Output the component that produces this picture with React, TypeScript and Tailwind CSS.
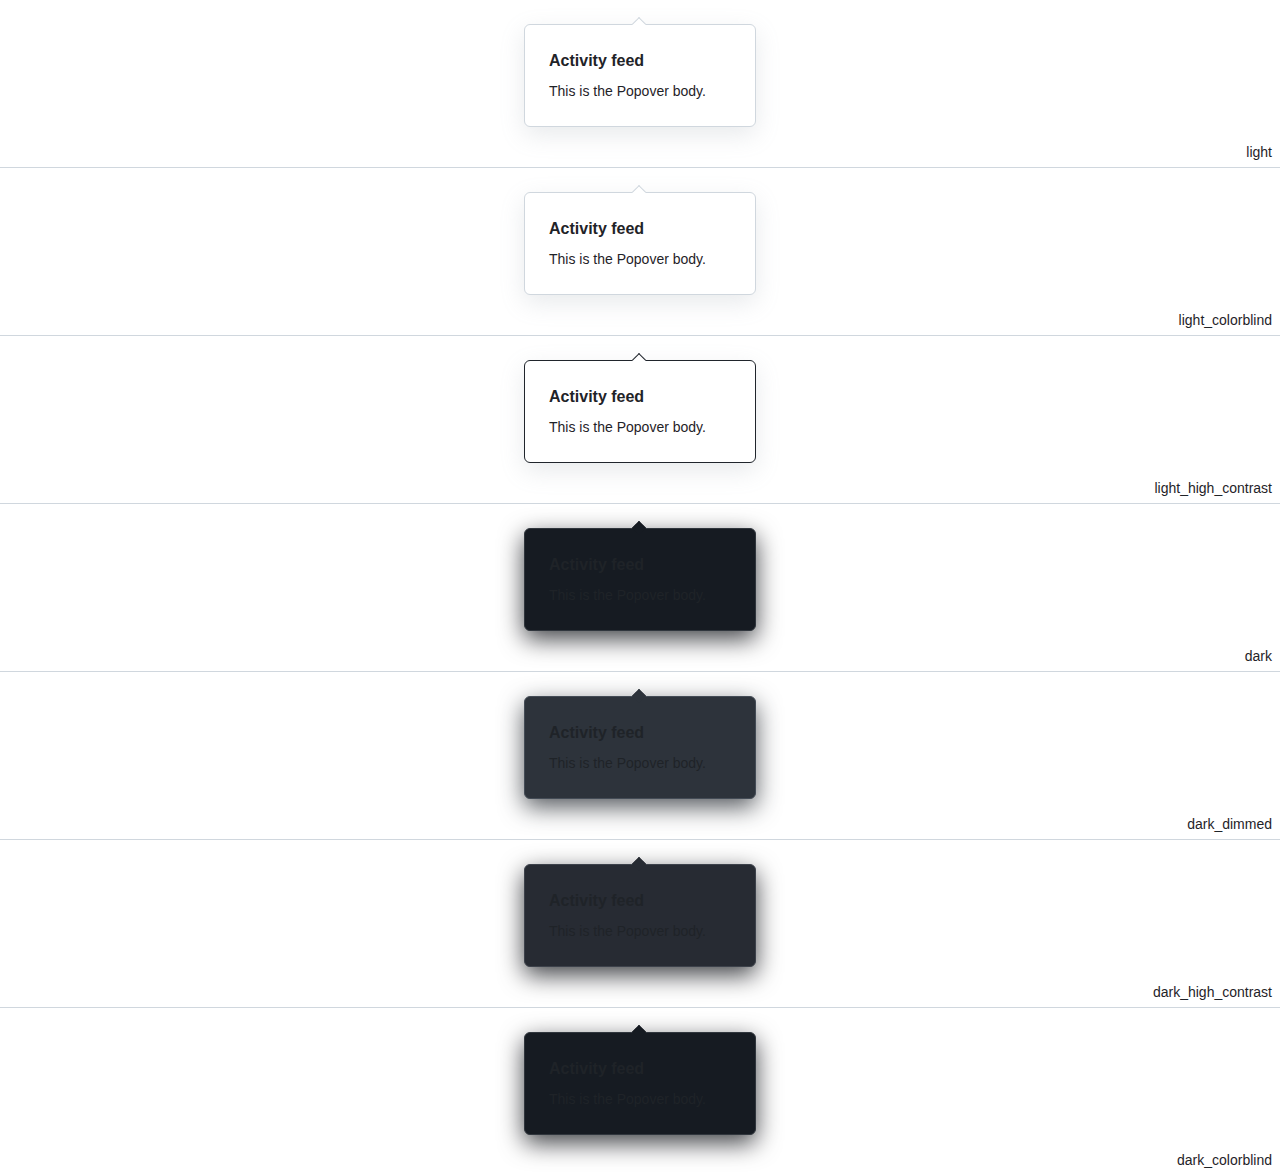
import React from "react";

type Theme = {
  name: string;
  box: string;
  caret: string;
};

const themes: Theme[] = [
  {
    name: "light",
    box: "bg-white border-[#d0d7de] text-[#1f2328] shadow-[0_8px_24px_rgba(140,149,159,0.2)]",
    caret: "bg-white border-[#d0d7de]",
  },
  {
    name: "light_colorblind",
    box: "bg-white border-[#d0d7de] text-[#1f2328] shadow-[0_8px_24px_rgba(140,149,159,0.2)]",
    caret: "bg-white border-[#d0d7de]",
  },
  {
    name: "light_high_contrast",
    box: "bg-white border-[#20252c] text-[#1f2328] shadow-[0_8px_24px_rgba(140,149,159,0.2)]",
    caret: "bg-white border-[#20252c]",
  },
  {
    name: "dark",
    box: "bg-[#161b22] border-[#30363d] text-[#1f2328] shadow-[0_8px_24px_rgba(1,4,9,0.75)]",
    caret: "bg-[#161b22] border-[#161b22]",
  },
  {
    name: "dark_dimmed",
    box: "bg-[#2d333b] border-[#444c56] text-[#1f2328] shadow-[0_8px_24px_rgba(28,33,40,0.75)]",
    caret: "bg-[#2d333b] border-[#2d333b]",
  },
  {
    name: "dark_high_contrast",
    box: "bg-[#272b33] border-[#3d424b] text-[#1f2328] shadow-[0_8px_24px_rgba(1,4,9,0.75)]",
    caret: "bg-[#272b33] border-[#272b33]",
  },
  {
    name: "dark_colorblind",
    box: "bg-[#161b22] border-[#30363d] text-[#1f2328] shadow-[0_8px_24px_rgba(1,4,9,0.75)]",
    caret: "bg-[#161b22] border-[#161b22]",
  },
];

function Section({ t }: { t: Theme }) {
  return (
    <div className="h-[168px] border-b border-[#d0d7de] flex flex-col">
      <div className="pt-[24px] flex justify-center">
        <div className={`relative w-[232px] rounded-[6px] border ${t.box}`}>
          <div
            className={`absolute left-[109px] top-[-6px] w-[10px] h-[10px] rotate-45 border-t border-l ${t.caret}`}
          />
          <div className="relative p-[24px]">
            <div className="text-[16px] leading-[24px] font-bold mb-[8px]">Activity feed</div>
            <div className="text-[14px] leading-[21px]">This is the Popover body.</div>
          </div>
        </div>
      </div>
      <div className="flex-1 flex items-end justify-end pr-[8px] pb-[5px]">
        <span className="text-[14px] leading-[20px] text-[#1f2328]">{t.name}</span>
      </div>
    </div>
  );
}

export default function App() {
  return (
    <div className="bg-white" style={{ fontFamily: '"Liberation Sans", Arial, sans-serif' }}>
      {themes.map((t) => (
        <Section key={t.name} t={t} />
      ))}
    </div>
  );
}
